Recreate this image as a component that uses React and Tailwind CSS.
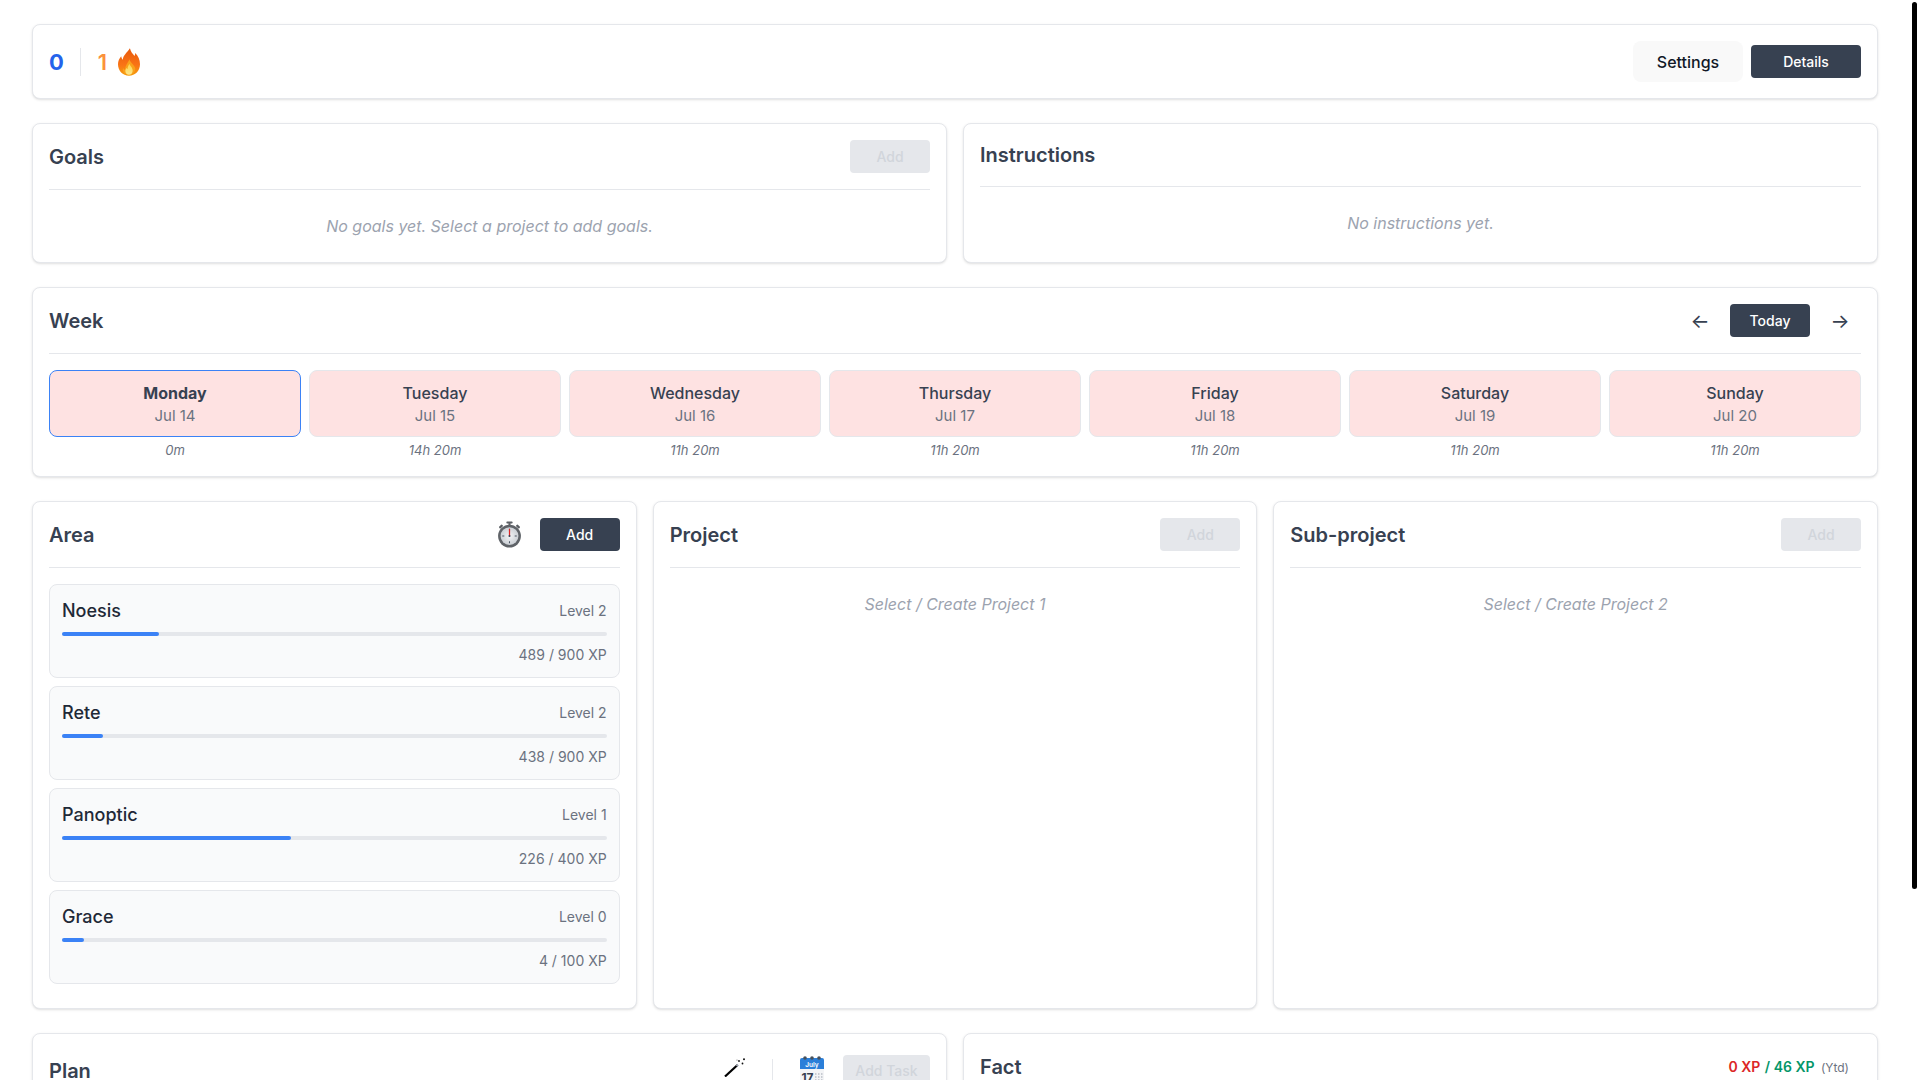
import React from "react";

const Fire = ({ className }) => (
  <svg viewBox="0 0 24 30" className={className}>
    <defs>
      <linearGradient id="f1" x1="0" y1="0" x2="0" y2="1">
        <stop offset="0" stopColor="#e8590c" />
        <stop offset="0.6" stopColor="#f97316" />
        <stop offset="1" stopColor="#f59e0b" />
      </linearGradient>
      <linearGradient id="f2" x1="0" y1="0" x2="0" y2="1">
        <stop offset="0" stopColor="#fcd34d" />
        <stop offset="1" stopColor="#fde68a" />
      </linearGradient>
    </defs>
    <path d="M13 0c1 4 3 6 5 8.500 .6-1 .8-2 .7-3.200C22 8.500 24 12.500 24 17.500 24 24.500 18.800 30 12 30S0 24.500 0 17.500C0 14 1.500 11 3.500 8.800c.2 1.500.7 2.700 1.700 3.700C5.500 8 9.500 5 13 0z" fill="url(#f1)" />
    <path d="M12.500 12c.5 3 4.500 5.500 6 9 1.300 3.500-1.500 8-6.500 8S4.300 25 5.500 21.500c.6 1.200 1.300 1.800 2.300 2.100C7.500 19 11 16 12.500 12z" fill="#f9a11b" />
    <path d="M12.500 17c.4 2 3.500 4 3.500 7.500 0 2.500-1.800 4.500-4 4.500s-4-1.900-4-4.200c0-1.500.7-2.600 1.500-3.300.3.700.6 1 1 1.200C10.300 20.500 11.500 19 12.500 17z" fill="url(#f2)" />
  </svg>
);

const Stopwatch = ({ className }) => (
  <svg viewBox="0 0 24 26" className={className}>
    <defs>
      <radialGradient id="sw" cx="0.5" cy="0.5" r="0.6">
        <stop offset="0" stopColor="#f3f4f6" />
        <stop offset="1" stopColor="#c3c8ce" />
      </radialGradient>
    </defs>
    <rect x="9" y="0.500" width="6" height="2" rx="0.800" fill="#5b5f64" />
    <rect x="11" y="2" width="2" height="3" fill="#5b5f64" />
    <rect x="1.800" y="4.200" width="4" height="2.200" rx="0.800" fill="#5b5f64" transform="rotate(-42 3.800 5.300)" />
    <rect x="18.200" y="4.200" width="4" height="2.200" rx="0.800" fill="#5b5f64" transform="rotate(42 20.200 5.300)" />
    <circle cx="12" cy="14.500" r="11" fill="#5f6368" />
    <circle cx="12" cy="14.500" r="8.600" fill="url(#sw)" />
    <path d="M12 7.500v2M12 19.500v2M5 14.500h2M17 14.500h2" stroke="#4b5563" strokeWidth="1" />
    <path d="M12 7.500L12 14.500" stroke="#dc2626" strokeWidth="1.200" />
    <circle cx="12" cy="14.500" r="1" fill="#374151" />
  </svg>
);

const Wand = ({ className }) => (
  <svg viewBox="0 0 21 19" className={className}>
    <path d="M1 18.500L13.500 7" stroke="#000" strokeWidth="2.200" />
    <path d="M12.500 8L14 6.600" stroke="#9ca3af" strokeWidth="2.200" />
    <circle cx="15" cy="3" r="0.900" fill="#111" />
    <circle cx="20" cy="1.200" r="1" fill="#111" />
    <circle cx="18.500" cy="5.500" r="0.900" fill="#111" />
    <circle cx="13" cy="2" r="0.500" fill="#555" />
  </svg>
);

const CalendarIcon = ({ className }) => (
  <svg viewBox="0 0 24 30" className={className}>
    <rect x="0" y="2" width="24" height="28" rx="2" fill="#f3f4f6" />
    <path d="M0 4a2 2 0 012-2h20a2 2 0 012 2v9H0z" fill="#2b7fd9" />
    <circle cx="5" cy="2" r="1.800" fill="#47515c" />
    <circle cx="12" cy="2" r="1.800" fill="#47515c" />
    <circle cx="19" cy="2" r="1.800" fill="#47515c" />
    <text x="12" y="10.500" textAnchor="middle" fontSize="6.500" fontWeight="600" fill="#fff" fontFamily="Inter, sans-serif">July</text>
    <text x="7.500" y="26" textAnchor="middle" fontSize="12" fontWeight="700" fill="#374151" fontFamily="Inter, sans-serif">17</text>
    <path d="M15 18h1.500M18 18h1.500M21 18h1.500M15 21h1.500M18 21h1.500M21 21h1.500M15 24h1.500M18 24h1.500M21 24h1.500" stroke="#9ca3af" strokeWidth="1" />
  </svg>
);

const Card = ({ className = "", children }) => (
  <div className={`rounded-lg border border-[#e5e7eb] bg-white p-4 shadow-sm ${className}`}>{children}</div>
);

const DarkBtn = ({ children, className = "" }) => (
  <button className={`h-[33px] rounded bg-[#374151] text-sm font-medium text-white ${className}`}>{children}</button>
);

const AddOff = ({ children = "Add", className = "w-[80px]" }) => (
  <button className={`h-[33px] rounded bg-[#e5e7eb] text-sm font-medium text-[#d1d5db] ${className}`}>{children}</button>
);

const Title = ({ children }) => <h2 className="text-xl font-semibold leading-[30px] text-[#374151]">{children}</h2>;

const Empty = ({ children }) => <p className="mt-4 py-2 text-center text-base italic text-[#9ca3af]">{children}</p>;

const days = [
  ["Monday", "Jul 14", "0m", true],
  ["Tuesday", "Jul 15", "14h 20m"],
  ["Wednesday", "Jul 16", "11h 20m"],
  ["Thursday", "Jul 17", "11h 20m"],
  ["Friday", "Jul 18", "11h 20m"],
  ["Saturday", "Jul 19", "11h 20m"],
  ["Sunday", "Jul 20", "11h 20m"],
];

const areas = [
  ["Noesis", "Level 2", "489 / 900 XP", 17.8],
  ["Rete", "Level 2", "438 / 900 XP", 7.5],
  ["Panoptic", "Level 1", "226 / 400 XP", 42],
  ["Grace", "Level 0", "4 / 100 XP", 4],
];

export default function App() {
  return (
    <div
      className="relative h-screen overflow-hidden bg-white text-base leading-normal text-[#374151]"
      style={{ fontFamily: "Inter, sans-serif" }}
    >
      <div className="flex flex-col gap-6 py-6 pl-8 pr-[42px]">
        <Card className="flex items-center justify-between">
          <div className="flex items-center">
            <span className="text-[22px] font-bold leading-7 text-[#2563eb]">0</span>
            <span className="ml-4 mr-[17px] h-7 w-px bg-[#e5e7eb]" />
            <span className="text-[22px] font-semibold leading-7 text-[#fb923c]">1</span>
            <Fire className="ml-[11px] h-[28px] w-[22px]" />
          </div>
          <div className="flex items-center gap-2">
            <button className="h-[41px] w-[110px] rounded-lg bg-[#f9f9f9] text-base font-medium text-[#111827]">Settings</button>
            <DarkBtn className="w-[110px]">Details</DarkBtn>
          </div>
        </Card>

        <div className="grid grid-cols-2 gap-4">
          <Card>
            <div className="flex items-center justify-between border-b border-[#e5e7eb] pb-4">
              <Title>Goals</Title>
              <AddOff />
            </div>
            <Empty>No goals yet. Select a project to add goals.</Empty>
          </Card>
          <Card>
            <div className="border-b border-[#e5e7eb] pb-4">
              <Title>Instructions</Title>
            </div>
            <Empty>No instructions yet.</Empty>
          </Card>
        </div>

        <Card>
          <div className="flex items-center justify-between border-b border-[#e5e7eb] pb-4">
            <Title>Week</Title>
            <div className="flex items-center gap-[11px] pr-[2px]">
              <button className="flex h-[33px] w-[38px] items-center justify-center text-xl text-[#374151]">←</button>
              <DarkBtn className="w-[80px]">Today</DarkBtn>
              <button className="flex h-[33px] w-[38px] items-center justify-center text-xl text-[#374151]">→</button>
            </div>
          </div>
          <div className="mt-4 grid grid-cols-7 gap-2">
            {days.map(([d, date, t, active]) => (
              <div key={d} className="text-center">
                <div className={`rounded-lg border bg-[#fee2e2] p-2.5 ${active ? "border-[#3b82f6]" : "border-[#e5e7eb]"}`}>
                  <div className={`text-base leading-6 text-[#374151] ${active ? "font-bold" : "font-medium"}`}>{d}</div>
                  <div className="text-[15px] leading-[21px] text-[#6b7280]">{date}</div>
                </div>
                <div className="mt-1 text-[13px] leading-[19px] italic text-[#6b7280]">{t}</div>
              </div>
            ))}
          </div>
        </Card>

        <div className="grid grid-cols-3 gap-4">
          <Card>
            <div className="flex items-center justify-between border-b border-[#e5e7eb] pb-4">
              <Title>Area</Title>
              <div className="flex items-center gap-[18px]">
                <Stopwatch className="h-[27px] w-[25px]" />
                <DarkBtn className="w-[80px]">Add</DarkBtn>
              </div>
            </div>
            <div className="mt-4">
              {areas.map(([name, level, xp, pct]) => (
                <div key={name} className="mb-2 rounded-lg border border-[#e5e7eb] bg-[#f9fafb] p-3">
                  <div className="flex items-center justify-between">
                    <span className="text-lg font-medium leading-[27px] text-[#1f2937]">{name}</span>
                    <span className="text-sm leading-[21px] text-[#6b7280]">{level}</span>
                  </div>
                  <div className="mt-2 h-1 w-full rounded-full bg-[#e5e7eb]">
                    <div className="h-1 rounded-full bg-[#3b82f6]" style={{ width: `${pct}%` }} />
                  </div>
                  <div className="mt-2 text-right text-sm leading-[21px] text-[#6b7280]">{xp}</div>
                </div>
              ))}
            </div>
          </Card>
          <Card>
            <div className="flex items-center justify-between border-b border-[#e5e7eb] pb-4">
              <Title>Project</Title>
              <AddOff />
            </div>
            <Empty>Select / Create Project 1</Empty>
          </Card>
          <Card>
            <div className="flex items-center justify-between border-b border-[#e5e7eb] pb-4">
              <Title>Sub-project</Title>
              <AddOff />
            </div>
            <Empty>Select / Create Project 2</Empty>
          </Card>
        </div>

        <div className="grid grid-cols-2 gap-4">
          <Card className="min-h-[255px]">
            <div className="flex h-[42px] items-center justify-between">
              <Title>Plan</Title>
              <div className="flex items-center">
                <Wand className="mb-[7px] h-[19px] w-[21px]" />
                <span className="ml-[27px] h-6 w-px bg-[#e5e7eb]" />
                <CalendarIcon className="ml-[27px] h-[30px] w-[24px]" />
                <AddOff className="ml-[19px] w-[87px]">Add Task</AddOff>
              </div>
            </div>
          </Card>
          <Card className="min-h-[255px]">
            <div className="flex h-[34px] items-center justify-between">
              <Title>Fact</Title>
              <div className="pr-3 text-sm font-semibold">
                <span className="text-[#dc2626]">0 XP</span>
                <span className="mx-[1px] text-[#059669]"> / 46 XP</span>
                <span className="ml-[2px] text-xs font-normal text-[#6b7280]"> (Ytd)</span>
              </div>
            </div>
          </Card>
        </div>
      </div>
      <div className="absolute right-[3px] top-[2px] h-[887px] w-[5px] rounded-full bg-black" />
    </div>
  );
}
